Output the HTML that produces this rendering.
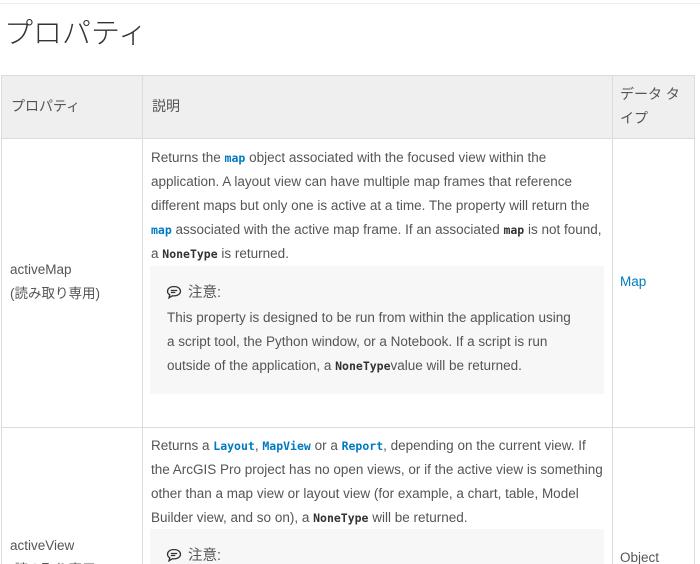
<!DOCTYPE html>
<html><head><meta charset="utf-8"><style>
*{margin:0;padding:0;box-sizing:border-box}
html,body{width:700px;height:564px;overflow:hidden}
body{background:#fff;font-family:"Liberation Sans","Noto Sans CJK JP",sans-serif;color:#555;position:relative}
.a{position:absolute}
.t{font-size:13.5px;line-height:24px;white-space:nowrap}
code{font-family:"DejaVu Sans Mono","Liberation Mono",monospace;font-size:11.5px;font-weight:bold;color:#333}
code.b{color:#0079c1}
.vl{position:absolute;width:1px;background:#dcdcdc}
.hl{position:absolute;height:1px;background:#dcdcdc}
.ic{display:inline-block;vertical-align:-2px;margin-right:6px}
</style></head><body>
<div class="hl" style="left:0;top:3px;width:700px;background:#eee"></div>
<div class="a" style="left:4px;top:12px;font-size:29px;line-height:44px;color:#333;font-weight:300">プロパティ</div>
<div class="a" style="left:1px;top:75px;width:693px;height:63px;background:#efefef"></div>
<div class="hl" style="left:1px;top:75px;width:694px"></div>
<div class="hl" style="left:1px;top:138px;width:694px"></div>
<div class="hl" style="left:1px;top:427px;width:694px"></div>
<div class="vl" style="left:1px;top:75px;height:489px"></div>
<div class="vl" style="left:142px;top:75px;height:489px"></div>
<div class="vl" style="left:612px;top:75px;height:489px"></div>
<div class="vl" style="left:694px;top:75px;height:489px"></div>
<div class="a t" style="left:11px;top:94px;font-size:14px">プロパティ</div>
<div class="a t" style="left:152px;top:94px;font-size:14px">説明</div>
<div class="a t" style="left:620px;top:82px;font-size:14px">データ タ<br>イプ</div>

<div class="a t" style="left:10px;top:258px">activeMap<br>(読み取り専用)</div>
<div class="a t" style="left:151px;top:146px">Returns the <code class="b">map</code> object associated with the focused view within the<br>application. A layout view can have multiple map frames that reference<br>different maps but only one is active at a time. The property will return the<br><code class="b">map</code> associated with the active map frame. If an associated <code>map</code> is not found,<br>a <code>NoneType</code> is returned.</div>
<div class="a" style="left:150px;top:266px;width:454px;height:128px;background:#f7f7f7"></div>
<div class="a t" style="left:166px;top:281px;font-size:14.5px"><svg class="ic" width="16" height="14" viewBox="0 0 16 14"><path d="M8 1.5C4.2 1.5 1.5 3.6 1.5 6.2c0 1.5.9 2.8 2.3 3.6L3 12.8l3.3-2c.5.1 1.1.1 1.7.1 3.8 0 6.5-2.1 6.5-4.7S11.8 1.5 8 1.5z" fill="none" stroke="#333" stroke-width="1.3"/><path d="M4.8 5.5h6.4M4.8 7.5h4.5" stroke="#333" stroke-width="1.2"/></svg>注意:</div>
<div class="a t" style="left:167px;top:306px">This property is designed to be run from within the application using<br>a script tool, the Python window, or a Notebook. If a script is run<br>outside of the application, a <code>NoneType</code>value will be returned.</div>
<div class="a t" style="left:620px;top:270px;color:#0079c1">Map</div>

<div class="a t" style="left:10px;top:534px">activeView<br>(読み取り専用)</div>
<div class="a t" style="left:151px;top:434px">Returns a <code class="b">Layout</code>, <code class="b">MapView</code> or a <code class="b">Report</code>, depending on the current view. If<br>the ArcGIS Pro project has no open views, or if the active view is something<br>other than a map view or layout view (for example, a chart, table, Model<br>Builder view, and so on), a <code>NoneType</code> will be returned.</div>
<div class="a" style="left:150px;top:529px;width:454px;height:35px;background:#f7f7f7"></div>
<div class="a t" style="left:166px;top:544px;font-size:14.5px"><svg class="ic" width="16" height="14" viewBox="0 0 16 14"><path d="M8 1.5C4.2 1.5 1.5 3.6 1.5 6.2c0 1.5.9 2.8 2.3 3.6L3 12.8l3.3-2c.5.1 1.1.1 1.7.1 3.8 0 6.5-2.1 6.5-4.7S11.8 1.5 8 1.5z" fill="none" stroke="#333" stroke-width="1.3"/><path d="M4.8 5.5h6.4M4.8 7.5h4.5" stroke="#333" stroke-width="1.2"/></svg>注意:</div>
<div class="a t" style="left:620px;top:546px">Object</div>
</body></html>
